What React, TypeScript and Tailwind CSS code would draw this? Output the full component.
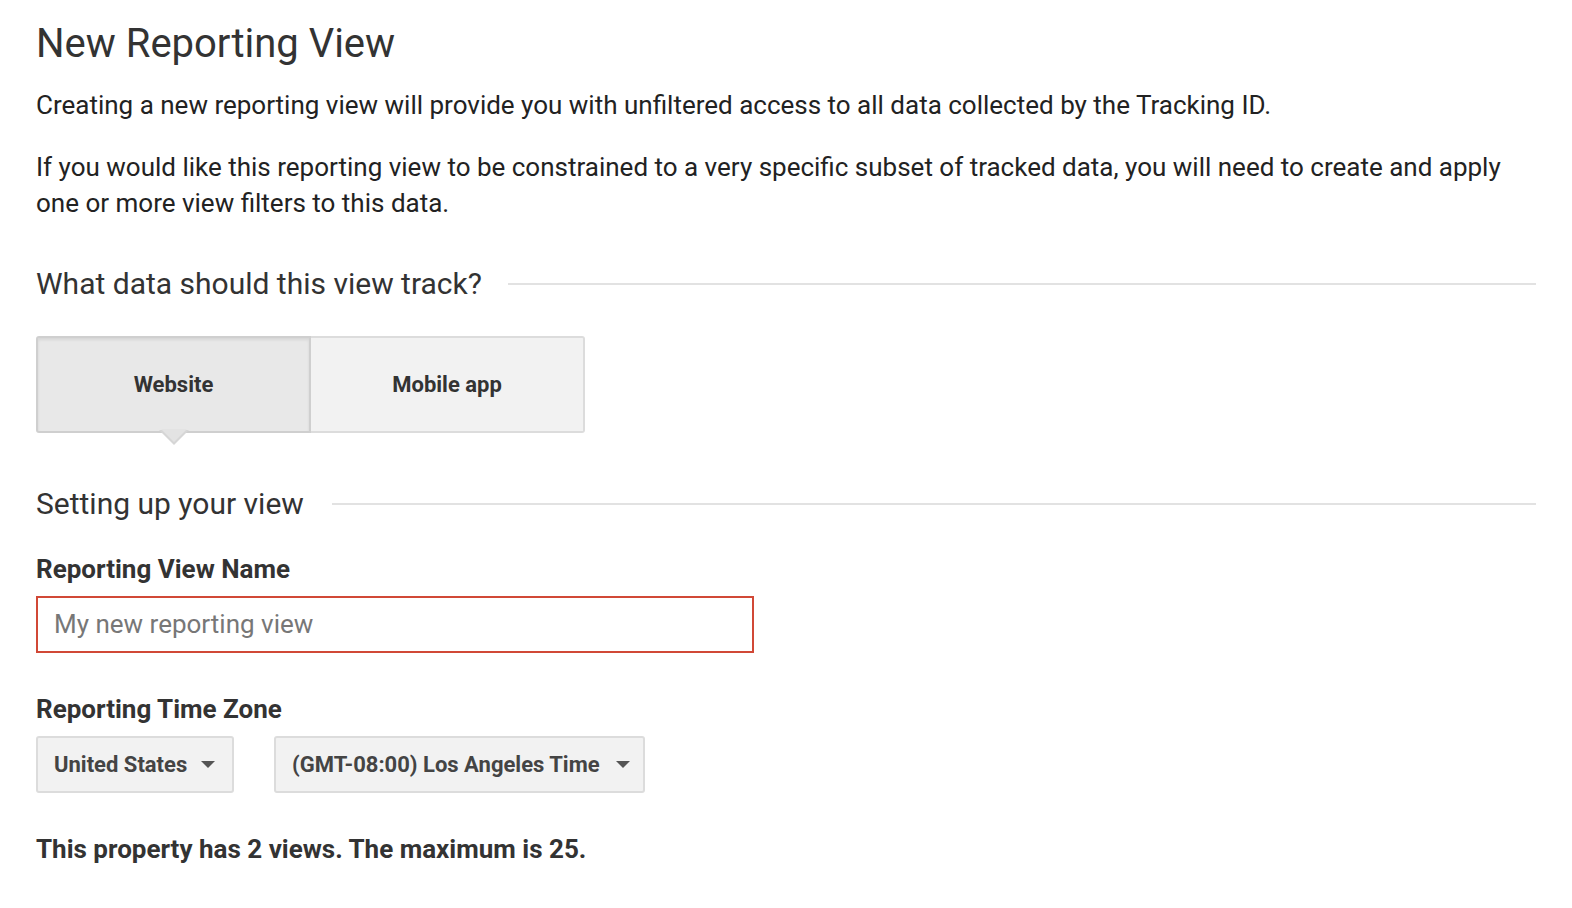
import React from "react";

function Caret() {
  return (
    <svg width="14" height="8" viewBox="0 0 14 8" className="shrink-0">
      <path d="M0 0 L14 0 L7 7 Z" fill="#555" />
    </svg>
  );
}

export default function App() {
  return (
    <div
      className="min-h-[908px] w-[1572px] bg-white pl-[36px] pr-[36px] pt-[22px] text-[#222]"
      style={{ fontFamily: "Roboto, 'Liberation Sans', sans-serif" }}
    >
      <h1 className="text-[40px] leading-[44px] font-normal text-[#333]">New Reporting View</h1>
      <p className="mt-[21px] text-[26px] leading-[36px]">
        Creating a new reporting view will provide you with unfiltered access to all data collected by the Tracking ID.
      </p>
      <p className="mt-[26px] text-[26px] leading-[36px] pr-[20px]">
        If you would like this reporting view to be constrained to a very specific subset of tracked data, you will need to create and apply one or more view filters to this data.
      </p>

      <div className="mt-[43px] flex items-center gap-[26px]">
        <h2 className="text-[30px] leading-[40px] text-[#333] whitespace-nowrap">What data should this view track?</h2>
        <div className="h-[2px] flex-1 bg-[#e2e2e2]" />
      </div>

      <div className="mt-[32px] flex">
        <div className="relative flex h-[97px] w-[275px] items-center justify-center rounded-l-[3px] border-2 border-[#cfcfcf] bg-[#e8e8e8] shadow-[inset_0_2px_3px_rgba(0,0,0,0.08)]">
          <span className="text-[22px] font-bold text-[#333]">Website</span>
          <div className="absolute left-1/2 top-full -ml-[15px] -mt-[1px] h-0 w-0 border-l-[15px] border-r-[15px] border-t-[15px] border-l-transparent border-r-transparent border-t-[#d6d6d6]" />
          <div className="absolute left-1/2 top-full -ml-[13px] -mt-[2px] h-0 w-0 border-l-[13px] border-r-[13px] border-t-[13px] border-l-transparent border-r-transparent border-t-[#e3e3e3]" />
        </div>
        <div className="flex h-[97px] w-[274px] items-center justify-center rounded-r-[3px] border-2 border-l-0 border-[#dcdcdc] bg-[#f2f2f2]">
          <span className="text-[22px] font-bold text-[#333]">Mobile app</span>
        </div>
      </div>

      <div className="mt-[51px] flex items-center gap-[28px]">
        <h2 className="text-[30px] leading-[40px] text-[#333] whitespace-nowrap">Setting up your view</h2>
        <div className="h-[2px] flex-1 bg-[#e2e2e2]" />
      </div>

      <div className="mt-[29px] text-[26px] font-bold leading-[32px] text-[#333]">Reporting View Name</div>
      <div className="mt-[11px] flex h-[57px] w-[718px] items-center border-2 border-[#d14836] px-[16px]">
        <span className="text-[26px] text-[#777]">My new reporting view</span>
      </div>

      <div className="mt-[40px] text-[26px] font-bold leading-[32px] text-[#333]">Reporting Time Zone</div>
      <div className="mt-[11px] flex gap-[40px]">
        <div className="flex h-[57px] w-[198px] items-center gap-[14px] rounded-[3px] border-2 border-[#dcdcdc] bg-[#f2f2f2] pl-[16px]">
          <span className="text-[22px] font-bold text-[#444]">United States</span>
          <Caret />
        </div>
        <div className="flex h-[57px] w-[371px] items-center gap-[16px] rounded-[3px] border-2 border-[#dcdcdc] bg-[#f2f2f2] pl-[16px]">
          <span className="text-[22px] font-bold text-[#444]">(GMT-08:00) Los Angeles Time</span>
          <Caret />
        </div>
      </div>

      <div className="mt-[39px] text-[26px] font-bold leading-[34px] text-[#333]">
        This property has 2 views. The maximum is 25.
      </div>
    </div>
  );
}
